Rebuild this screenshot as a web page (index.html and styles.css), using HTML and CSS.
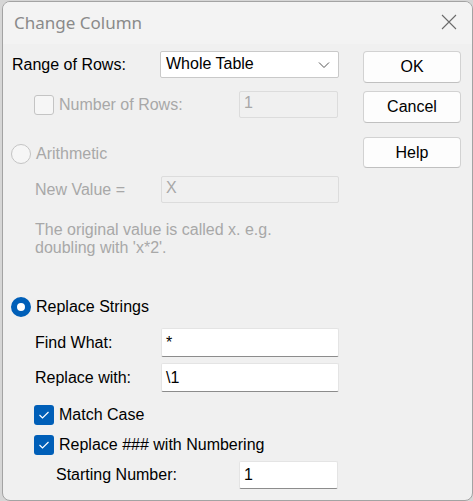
FILE: index.html
```html
<!DOCTYPE html>
<html lang="en">
<head>
<meta charset="UTF-8">
<meta name="viewport" content="width=device-width, initial-scale=1.0">
<title>Change Column</title>
<link rel="stylesheet" href="styles.css">
</head>
<body>
    <div class="dialog">
        <div class="titlebar">
            <span class="title">Change Column</span>
            <svg class="close" width="16" height="16" viewBox="0 0 16 16">
                <path d="M1 1 L15 15 M15 1 L1 15" stroke="#6b6b6b" stroke-width="1.1" fill="none"/>
            </svg>
        </div>

        <div class="content">
            <div class="form">
                <div class="row row-range">
                    <span class="label label-wide">Range of Rows:</span>
                    <div class="select">
                        <span>Whole Table</span>
                        <svg width="12" height="8" viewBox="0 0 12 8">
                            <path d="M1 1.5 L6 6.5 L11 1.5" stroke="#555" stroke-width="1" fill="none"/>
                        </svg>
                    </div>
                </div>

                <div class="row row-count indent-box disabled">
                    <span class="box box-off"></span>
                    <span class="label label-count">Number of Rows:</span>
                    <div class="field field-short field-off">1</div>
                </div>

                <div class="row row-radio row-arith disabled">
                    <span class="radio radio-off"></span>
                    <span class="radio-text">Arithmetic</span>
                </div>

                <div class="row row-newval indent disabled">
                    <span class="label label-mid">New Value =</span>
                    <div class="field field-long field-off">X</div>
                </div>

                <p class="note indent disabled">The original value is called x. e.g.<br>doubling with 'x*2'.</p>

                <div class="row row-radio row-replace">
                    <span class="radio radio-on"></span>
                    <span class="radio-text">Replace Strings</span>
                </div>

                <div class="row row-find indent">
                    <span class="label label-mid">Find What:</span>
                    <div class="field field-long">*</div>
                </div>

                <div class="row row-with indent">
                    <span class="label label-mid">Replace with:</span>
                    <div class="field field-long">\1</div>
                </div>

                <div class="row row-check row-case indent-box">
                    <span class="box box-on">
                        <svg width="12" height="10" viewBox="0 0 12 10">
                            <path d="M1.5 5 L4.5 8 L10.5 2" stroke="#fff" stroke-width="1.2" fill="none"/>
                        </svg>
                    </span>
                    <span class="label">Match Case</span>
                </div>

                <div class="row row-check row-numbering indent-box">
                    <span class="box box-on">
                        <svg width="12" height="10" viewBox="0 0 12 10">
                            <path d="M1.5 5 L4.5 8 L10.5 2" stroke="#fff" stroke-width="1.2" fill="none"/>
                        </svg>
                    </span>
                    <span class="label">Replace ### with Numbering</span>
                </div>

                <div class="row row-start indent-deep">
                    <span class="label label-start">Starting Number:</span>
                    <div class="field field-short">1</div>
                </div>
            </div>

            <div class="buttons">
                <button class="btn btn-ok">OK</button>
                <button class="btn btn-cancel">Cancel</button>
                <button class="btn btn-help">Help</button>
            </div>
        </div>
    </div>
</body>
</html>
```

FILE: styles.css
```css
body {
    margin: 0;
    padding: 0;
    width: 473px;
    height: 501px;
    overflow: hidden;
    background-color: #d6d6d6;
    font-family: "Liberation Sans", Arial, sans-serif;
    font-size: 16px;
    color: #000;
}

.dialog {
    box-sizing: border-box;
    width: 471px;
    height: 500px;
    margin: 1px 0 0 2px;
    border: 1px solid #a3a3a3;
    border-radius: 8px;
    background-color: #f0f0f0;
    overflow: hidden;
}

.titlebar {
    height: 42px;
    background-color: #f3f3f3;
    display: flex;
    align-items: center;
    justify-content: space-between;
    padding: 0 15px 0 11px;
}

.title {
    font-family: "Noto Sans", sans-serif;
    font-size: 17px;
    color: #8a8a8a;
    margin-top: -1px;
}

.close {
    margin-top: -2px;
}

.content {
    display: flex;
    padding: 0 0 0 8px;
}

.form {
    width: 352px;
    display: flex;
    flex-direction: column;
}

.row {
    display: flex;
    align-items: center;
}

.disabled {
    color: #a8a8a8;
}

.indent {
    padding-left: 24px;
}

.indent-box {
    padding-left: 23px;
}

.indent-deep {
    padding-left: 45px;
}

.label {
    white-space: nowrap;
}

.label-wide {
    width: 149px;
    padding-left: 1px;
    box-sizing: border-box;
}

.label-mid {
    width: 126px;
}

.label-count {
    width: 180px;
}

.label-start {
    width: 183px;
}

/* rows, top to bottom */
.row-range { height: 27px; margin-top: 7px; }
.row-count { height: 27px; margin-top: 13px; }
.row-arith { height: 22px; margin-top: 25px; }
.row-newval { height: 27px; margin-top: 11px; }
.row-replace { height: 22px; margin-top: 39px; }
.row-find { height: 29px; margin-top: 10px; }
.row-with { height: 29px; margin-top: 6px; }
.row-case { height: 22px; margin-top: 12px; }
.row-numbering { height: 22px; margin-top: 8px; }
.row-start { height: 28px; margin-top: 5px; }

.note {
    margin: 18px 0 0;
    line-height: 18px;
}

.select {
    box-sizing: border-box;
    width: 179px;
    height: 27px;
    background: #fff;
    border: 1px solid #c9c9c9;
    border-radius: 2px;
    display: flex;
    align-items: center;
    justify-content: space-between;
    padding: 0 8px 0 5px;
}

.select span {
    margin-top: -2px;
}

.field {
    box-sizing: border-box;
    height: 100%;
    background: #fff;
    border: 1px solid #e4e4e4;
    border-bottom: 1px solid #8c8c8c;
    border-radius: 2px;
    padding: 0 0 0 4px;
    display: flex;
    align-items: center;
}

.field-long {
    width: 178px;
}

.field-short {
    width: 99px;
}

.field-off {
    background: #f0f0f0;
    border: 1px solid #dcdcdc;
    color: #a8a8a8;
    align-items: flex-start;
    padding-top: 2px;
}

.box {
    box-sizing: border-box;
    width: 20px;
    height: 20px;
    border-radius: 3px;
    display: flex;
    align-items: center;
    justify-content: center;
    margin-right: 5px;
}

.box-off {
    background: #f6f6f6;
    border: 1px solid #c4c4c4;
}

.box-on {
    background: #005fb8;
}

.radio {
    box-sizing: border-box;
    width: 20px;
    height: 20px;
    border-radius: 50%;
    margin-right: 5px;
    flex-shrink: 0;
}

.radio-off {
    background: #f6f6f6;
    border: 1px solid #c4c4c4;
}

.radio-on {
    border: 6px solid #005fb8;
    background: #fff;
}

.radio-text {
    white-space: nowrap;
}

.buttons {
    display: flex;
    flex-direction: column;
    margin-top: 7px;
}

.btn {
    box-sizing: border-box;
    width: 98px;
    height: 32px;
    background: #fdfdfd;
    border: 1px solid #d2d2d2;
    border-bottom-color: #c0c0c0;
    border-radius: 4px;
    font-family: "Liberation Sans", Arial, sans-serif;
    font-size: 16px;
    color: #000;
    padding: 0;
}

.btn-cancel {
    margin-top: 8px;
}

.btn-help {
    margin-top: 14px;
    height: 31px;
}
```
